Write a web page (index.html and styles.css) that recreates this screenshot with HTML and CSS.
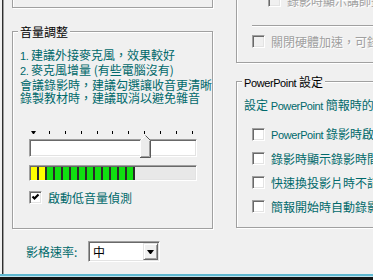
FILE: index.html
```html
<!DOCTYPE html>
<html lang="zh-Hant">
<head>
    <meta charset="UTF-8">
    <meta name="viewport" content="width=device-width, initial-scale=1.0">
    <title>錄影設定</title>
    <link rel="stylesheet" href="styles.css">
</head>
<body>
    <div class="dialog">
        <div class="page">
            <div class="col">
                <div class="group group-prev"></div>

                <div class="group audio">
                    <span class="group-title">音量調整</span>
                    <p class="hint">
                        <span class="en">1.</span> 建議外接麥克風，效果較好<br>
                        <span class="en">2.</span> 麥克風增量 (有些電腦沒有)<br>
                        會議錄影時，建議勾選讓收音更清晰<br>
                        錄製教材時，建議取消以避免雜音
                    </p>

                    <div class="slider">
                        <div class="ticks">
                            <i class="first"></i><i></i><i></i><i></i><i></i><i></i><i></i><i></i><i></i><i></i><i></i>
                        </div>
                        <div class="track sunken">
                            <span class="thumb">
                                <svg width="11" height="23" viewBox="0 0 11 23">
                                    <polygon points="0.5,5.5 5.5,0.5 10.5,5.5 10.5,22.5 0.5,22.5" fill="#ececec"/>
                                    <polyline points="0.5,22 0.5,5.5 5.5,0.5" fill="none" stroke="#fff"/>
                                    <polyline points="5.5,0.5 10.5,5.5 10.5,22.5 0,22.5" fill="none" stroke="#5a5a5a"/>
                                    <polyline points="9.5,6 9.5,21.5 1,21.5" fill="none" stroke="#a0a0a0"/>
                                </svg>
                            </span>
                        </div>
                    </div>

                    <div class="meter sunken">
                        <i class="seg yellow"></i><i class="seg yellow"></i>
                        <i class="seg"></i><i class="seg"></i><i class="seg"></i><i class="seg"></i>
                        <i class="seg"></i><i class="seg"></i><i class="seg"></i><i class="seg"></i>
                        <i class="seg"></i><i class="seg"></i><i class="seg"></i>
                    </div>

                    <label class="check-row">
                        <span class="check">
                            <svg width="11" height="11" viewBox="0 0 11 11">
                                <path d="M2.5 4.5 L4.5 6.5 L8.5 2.5" fill="none" stroke="#000" stroke-width="2.2"/>
                            </svg>
                        </span>
                        <span>啟動低音量偵測</span>
                    </label>
                </div>

                <div class="rate-row">
                    <span class="rate-label">影格速率:</span>
                    <div class="combo sunken">
                        <span class="combo-value">中</span>
                        <span class="combo-btn"><i class="arrow"></i></span>
                    </div>
                </div>
            </div>

            <div class="col">
                <div class="group group-video">
                    <div class="check-row disabled sub">
                        <span class="check"></span><span>錄影時顯示講師畫面於右下角</span>
                    </div>
                    <div class="separator"></div>
                    <div class="check-row disabled">
                        <span class="check"></span><span>關閉硬體加速，可錄製全螢幕影片</span>
                    </div>
                </div>

                <div class="group ppt">
                    <span class="group-title"><span class="en">PowerPoint</span> 設定</span>
                    <p class="hint">設定 <span class="en">PowerPoint</span> 簡報時的錄影選項</p>
                    <div class="check-list">
                        <label class="check-row"><span class="check"></span><span><span class="en">PowerPoint</span> 錄影時啟動全螢幕</span></label>
                        <label class="check-row"><span class="check"></span><span>錄影時顯示錄影時間長度</span></label>
                        <label class="check-row"><span class="check"></span><span>快速換投影片時不記錄</span></label>
                        <label class="check-row"><span class="check"></span><span>簡報開始時自動錄影</span></label>
                    </div>
                </div>
            </div>
        </div>
        <div class="frame-bottom"></div>
    </div>
</body>
</html>
```

FILE: styles.css
```css
* {
    box-sizing: border-box;
}

body {
    margin: 0;
    background: #f0f0f0;
    font-family: "Noto Sans CJK TC", "Noto Sans CJK SC", sans-serif;
    font-size: 12px;
    line-height: 13px;
    color: #000;
}

.dialog {
    width: 373px;
    height: 280px;
    overflow: hidden;
    display: flex;
    flex-direction: column;
}

.page {
    flex: 1;
    min-height: 0;
    margin-left: 2px;
    padding-left: 9px;
    border-left: 1px solid #2e2e2e;
    box-shadow: inset 1px 0 #9d9d9d;
    display: grid;
    grid-template-columns: 201px 230px;
    column-gap: 23px;
    align-items: start;
}

.frame-bottom {
    height: 6px;
    border-top: 2px solid #5fb8d0;
    border-bottom: 3px solid #141414;
    background: #c0e4ee;
}

.en {
    font-family: "Liberation Sans", Arial, sans-serif;
    font-size: 11px;
    letter-spacing: -0.4px;
}

/* group boxes */
.group {
    border: 1px solid #a0a0a0;
    box-shadow: inset 1px 1px #fff, 1px 1px #fff;
}

.group-title {
    display: block;
    width: fit-content;
    margin: -7px 0 0 -2px;
    padding: 0 2px;
    background: #f0f0f0;
    white-space: nowrap;
}

.group-prev {
    height: 40px;
    margin-top: -32px;
}

.hint {
    margin: 10px 0 0;
    color: #00696b;
    white-space: nowrap;
}

.sunken {
    border: 1px solid;
    border-color: #a0a0a0 #fff #fff #a0a0a0;
    box-shadow: inset 1px 1px #696969, inset -1px -1px #e3e3e3;
}

/* audio */
.audio {
    margin-top: 23px;
    padding: 0 0 24px 7px;
}

.slider {
    width: 168px;
    margin: 27px 0 0 9px;
}

.ticks {
    display: flex;
    justify-content: space-between;
    height: 3px;
    margin: 0 2px;
}

.ticks i {
    width: 5px;
    height: 3px;
    background: linear-gradient(#000, #000) center / 1px 3px no-repeat;
}

.ticks i.first {
    background: none;
    border-top: 3px solid #000;
    border-left: 2px solid transparent;
    border-right: 2px solid transparent;
}

.track {
    position: relative;
    height: 18px;
    margin-top: 5px;
    background: #fff;
}

.thumb {
    position: absolute;
    left: 110px;
    top: -5px;
    width: 11px;
    height: 23px;
}

.thumb svg {
    display: block;
}

.meter {
    display: flex;
    width: 168px;
    height: 16px;
    margin: 8px 0 0 9px;
    padding: 1px 0 0 1px;
    background: #e8e8e8;
}

.seg {
    width: 8px;
    height: 13px;
    background: #10e010;
    border-right: 2px solid #2a2a2a;
}

.seg.yellow {
    background: #ffff00;
}

/* checkboxes */
.check-row {
    display: flex;
    align-items: center;
    gap: 6px;
    height: 13px;
    color: #00696b;
    white-space: nowrap;
}

.audio .check-row {
    margin: 10px 0 0 9px;
}

.check {
    flex: none;
    width: 13px;
    height: 13px;
    background: #fff;
    border: 1px solid;
    border-color: #a0a0a0 #fff #fff #a0a0a0;
    box-shadow: inset 1px 1px #696969, inset -1px -1px #e3e3e3;
}

.check svg {
    display: block;
}

.disabled {
    color: #a0a0a0;
    text-shadow: 1px 1px #fff;
}

.disabled .check {
    background: #f0f0f0;
}

/* frame rate */
.rate-row {
    display: flex;
    align-items: center;
    margin-top: 12px;
    padding-left: 14px;
}

.rate-label {
    width: 62px;
    color: #00696b;
}

.combo {
    display: flex;
    width: 72px;
    height: 21px;
    background: #fff;
}

.combo-value {
    flex: 1;
    padding-left: 4px;
    line-height: 19px;
}

.combo-btn {
    display: flex;
    align-items: center;
    justify-content: center;
    width: 15px;
    height: 17px;
    margin: 1px 1px 1px 0;
    background: #f0f0f0;
    border: 1px solid;
    border-color: #e3e3e3 #696969 #696969 #e3e3e3;
    box-shadow: inset 1px 1px #fff, inset -1px -1px #a0a0a0;
}

.arrow {
    width: 7px;
    height: 4px;
    border-top: 4px solid #000;
    border-left: 3px solid transparent;
    border-right: 3px solid transparent;
}

/* right column */
.group-video {
    margin-top: -20px;
    padding: 13px 0 14px 15px;
}

.group-video .sub {
    margin-left: 16px;
}

.separator {
    height: 2px;
    margin: 18px 0 8px;
    border-top: 1px solid #a0a0a0;
    border-bottom: 1px solid #fff;
}

.ppt {
    margin-top: 18px;
    padding: 0 0 14px 7px;
}

.ppt .hint {
    margin-top: 8px;
}

.check-list {
    display: flex;
    flex-direction: column;
    gap: 11px;
    margin: 15px 0 0 8px;
}
```
